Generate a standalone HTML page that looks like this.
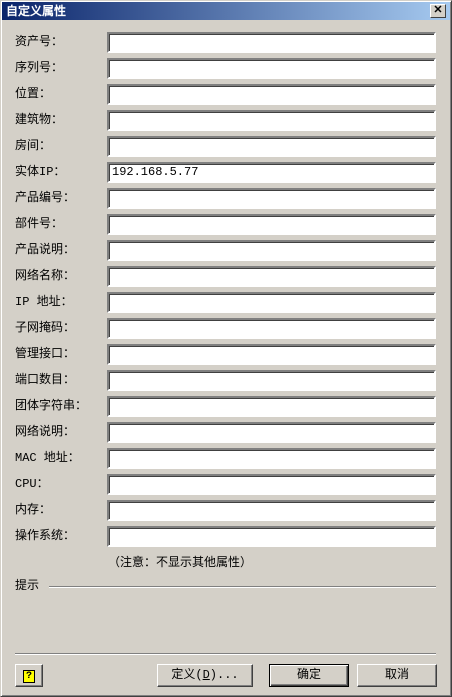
<!DOCTYPE html>
<html><head><meta charset="utf-8"><style>
*{margin:0;padding:0;box-sizing:border-box}
body{width:452px;height:697px;background:#d4d0c8;font-family:"Liberation Mono","WenQuanYi Zen Hei","Noto Sans CJK SC",monospace;font-size:12px;color:#000;position:relative;overflow:hidden}
.win{position:absolute;left:0;top:0;width:452px;height:697px;border:1px solid;border-color:#d4d0c8 #404040 #404040 #d4d0c8;box-shadow:inset 1px 1px #fff,inset -1px -1px #808080}
.title{position:absolute;left:2px;top:2px;width:448px;height:18px;background:linear-gradient(to right,#0a246a,#a6caf0);color:#fff;font-weight:bold;line-height:18px;padding-left:4px;font-size:12px;font-family:"WenQuanYi Zen Hei",sans-serif}
.close{position:absolute;left:430px;top:4px;width:16px;height:14px;background:#d4d0c8;border:1px solid;border-color:#fff #404040 #404040 #fff;font-size:11px;line-height:11px;text-align:center;color:#000;font-weight:bold;font-family:"Liberation Sans",sans-serif}
.lbl{position:absolute;left:15px;height:20px;line-height:20px}
.inp{position:absolute;left:107px;width:329px;height:21px;background:#fff;border:2px solid;border-color:#808080 #fff #fff #808080;box-shadow:inset 1px 1px #404040;font-size:12px;line-height:17px;padding-left:3px}
.btn{position:absolute;top:664px;height:23px;border:1px solid;border-color:#fff #404040 #404040 #fff;box-shadow:inset -1px -1px #808080;text-align:center;line-height:21px}
.hr{position:absolute;height:2px;border-top:1px solid #808080;border-bottom:1px solid #fff}
</style></head><body>
<div class="win"></div>
<div class="title">自定义属性</div>
<div class="close">✕</div>
<div class="lbl" style="top:32px">资产号：</div><div class="inp" style="top:32px"></div>
<div class="lbl" style="top:58px">序列号：</div><div class="inp" style="top:58px"></div>
<div class="lbl" style="top:84px">位置：</div><div class="inp" style="top:84px"></div>
<div class="lbl" style="top:110px">建筑物：</div><div class="inp" style="top:110px"></div>
<div class="lbl" style="top:136px">房间：</div><div class="inp" style="top:136px"></div>
<div class="lbl" style="top:162px">实体IP：</div><div class="inp" style="top:162px">192.168.5.77</div>
<div class="lbl" style="top:188px">产品编号：</div><div class="inp" style="top:188px"></div>
<div class="lbl" style="top:214px">部件号：</div><div class="inp" style="top:214px"></div>
<div class="lbl" style="top:240px">产品说明：</div><div class="inp" style="top:240px"></div>
<div class="lbl" style="top:266px">网络名称：</div><div class="inp" style="top:266px"></div>
<div class="lbl" style="top:292px">IP 地址：</div><div class="inp" style="top:292px"></div>
<div class="lbl" style="top:318px">子网掩码：</div><div class="inp" style="top:318px"></div>
<div class="lbl" style="top:344px">管理接口：</div><div class="inp" style="top:344px"></div>
<div class="lbl" style="top:370px">端口数目：</div><div class="inp" style="top:370px"></div>
<div class="lbl" style="top:396px">团体字符串：</div><div class="inp" style="top:396px"></div>
<div class="lbl" style="top:422px">网络说明：</div><div class="inp" style="top:422px"></div>
<div class="lbl" style="top:448px">MAC 地址：</div><div class="inp" style="top:448px"></div>
<div class="lbl" style="top:474px">CPU：</div><div class="inp" style="top:474px"></div>
<div class="lbl" style="top:500px">内存：</div><div class="inp" style="top:500px"></div>
<div class="lbl" style="top:526px">操作系统：</div><div class="inp" style="top:526px"></div>
<div class="lbl" style="left:108px;top:553px">（注意：不显示其他属性）</div>
<div class="lbl" style="top:576px">提示</div>
<div class="hr" style="left:49px;top:586px;width:387px"></div>
<div class="hr" style="left:15px;top:653px;width:421px"></div>
<div class="btn" style="left:15px;width:28px"><span style="display:inline-block;width:12px;height:13px;background:#ff0;border:1px solid #000;font-size:10px;line-height:11px;font-weight:bold;margin-top:4px">?</span></div>
<div class="btn" style="left:157px;width:96px">定义(<u>D</u>)...</div>
<div class="btn" style="left:269px;width:80px;border:1px solid #000;box-shadow:inset 1px 1px #fff,inset -1px -1px #404040,inset -2px -2px #808080">确定</div>
<div class="btn" style="left:357px;width:80px">取消</div>
</body></html>
